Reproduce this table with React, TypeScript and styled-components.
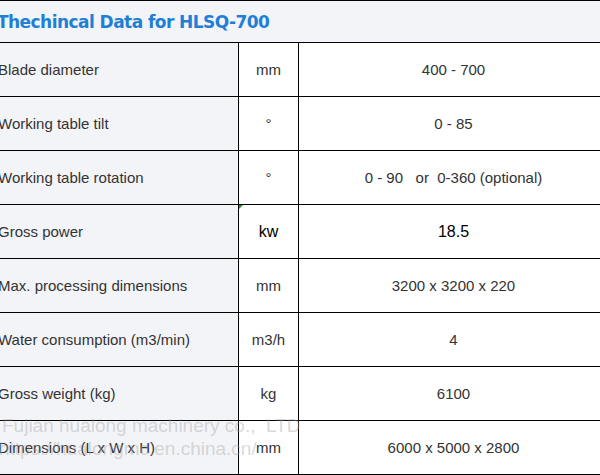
import React from "react";
import styled, { createGlobalStyle } from "styled-components";

const Global = createGlobalStyle`
  html, body { margin: 0; padding: 0; background: #fff; overflow: hidden; }
  body { font-family: "Liberation Sans", Arial, sans-serif; }
`;

const Page = styled.div`
  position: relative;
  width: 600px;
  height: 475px;
  overflow: hidden;
`;

const Sheet = styled.div`
  margin-left: -8px;
  width: 616px;
  display: grid;
  grid-template-columns: 247px 60px 309px;
  border-top: 1px solid #000;
`;

const Title = styled.div`
  grid-column: 1 / -1;
  height: 41px;
  background: #f3f4f8;
  border-bottom: 1px solid #000;
  display: flex;
  align-items: center;
  padding-left: 5px;
  font-family: "DejaVu Sans", Verdana, sans-serif;
  font-weight: bold;
  font-size: 17px;
  letter-spacing: -0.55px;
  color: #1f7fd6;
`;

const Cell = styled.div<{ $kind: "label" | "unit" | "value"; $dark?: boolean }>`
  position: relative;
  height: 53px;
  border-bottom: 1px solid #000;
  border-right: ${(p) => (p.$kind === "value" ? "none" : "1px solid #000")};
  background: ${(p) => (p.$kind === "label" ? "#f3f4f8" : "#fff")};
  display: flex;
  align-items: center;
  justify-content: ${(p) => (p.$kind === "label" ? "flex-start" : "center")};
  padding-left: ${(p) => (p.$kind === "label" ? "6px" : "0")};
  font-size: ${(p) => (p.$dark ? "16px" : "15px")};
  color: ${(p) => (p.$dark ? "#000" : "#333")};
  white-space: pre;
`;

const Marker = styled.span`
  position: absolute;
  left: 0;
  top: 0;
  width: 0;
  height: 0;
  border-top: 4px solid #2f8a2f;
  border-right: 4px solid transparent;
`;

const Watermark = styled.div`
  position: absolute;
  left: 2px;
  top: 414px;
  font-family: "Liberation Sans", Arial, sans-serif;
  font-size: 19px;
  line-height: 23px;
  color: rgba(165, 165, 165, 0.42);
  white-space: pre;
  pointer-events: none;
`;

const WatermarkLine = styled.div<{ $shift?: number }>`
  margin-left: ${(p) => p.$shift ?? 0}px;
`;

type Row = { label: string; unit: string; value: string; dark?: boolean; marker?: boolean };

const rows: Row[] = [
  { label: "Blade diameter", unit: "mm", value: "400 - 700" },
  { label: "Working table tilt", unit: "°", value: "0 - 85" },
  { label: "Working table rotation", unit: "°", value: "0 - 90   or  0-360 (optional)" },
  { label: "Gross power", unit: "kw", value: "18.5", dark: true, marker: true },
  { label: "Max. processing dimensions", unit: "mm", value: "3200 x 3200 x 220" },
  { label: "Water consumption (m3/min)", unit: "m3/h", value: "4" },
  { label: "Gross weight (kg)", unit: "kg", value: "6100" },
  { label: "Dimensions (L x W x H)", unit: "mm", value: "6000 x 5000 x 2800" },
];

export default function App() {
  return (
    <Page>
      <Global />
      <Sheet>
        <Title>Thechincal Data for HLSQ-700</Title>
        {rows.map((r) => (
          <React.Fragment key={r.label}>
            <Cell $kind="label">{r.label}</Cell>
            <Cell $kind="unit" $dark={r.dark}>
              {r.marker && <Marker />}
              {r.unit}
            </Cell>
            <Cell $kind="value" $dark={r.dark}>{r.value}</Cell>
          </React.Fragment>
        ))}
      </Sheet>
      <Watermark>
        <WatermarkLine>Fujian hualong machinery co.,  LTD</WatermarkLine>
        <WatermarkLine $shift={-3}>https://hualongmc.en.china.cn/</WatermarkLine>
      </Watermark>
    </Page>
  );
}
